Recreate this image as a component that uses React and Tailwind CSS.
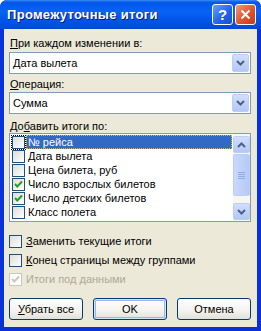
import React from 'react';

const Check = ({ color = '#21A121' }) => (
  <svg width="9" height="9" viewBox="0 0 9 9">
    <polyline points="1,4 3.3,6.5 8,1.5" fill="none" stroke={color} strokeWidth="2" />
  </svg>
);

const Box = ({ checked, disabled }) => (
  <span
    className={
      disabled
        ? 'w-[13px] h-[13px] shrink-0 flex items-center justify-center border border-[#CAC8BB] bg-white'
        : 'w-[13px] h-[13px] shrink-0 flex items-center justify-center border border-[#1C5180] bg-[linear-gradient(135deg,#DCDCD7,#FFFFFF)]'
    }
  >
    {checked && <Check color={disabled ? '#CAC8BB' : '#21A121'} />}
  </span>
);

const Chevron = ({ up }) => (
  <svg width="9" height="6" viewBox="0 0 9 6">
    <polyline
      points={up ? '1,5 4.5,1.5 8,5' : '1,1 4.5,4.5 8,1'}
      fill="none"
      stroke="#4D6185"
      strokeWidth="2"
    />
  </svg>
);

const Combo = ({ value }) => (
  <div className="h-[22px] flex border border-[#7F9DB9] bg-white">
    <span className="flex-1 pl-[3px] flex items-center">{value}</span>
    <span className="w-[17px] m-px flex items-center justify-center rounded-[2px] border border-[#B9CEF8] bg-[linear-gradient(to_bottom,#D2DEFB,#B3C7F6)]">
      <Chevron />
    </span>
  </div>
);

const items = [
  { label: '№ рейса', checked: false, selected: true },
  { label: 'Дата вылета', checked: false },
  { label: 'Цена билета, руб', checked: false },
  { label: 'Число взрослых билетов', checked: true },
  { label: 'Число детских билетов', checked: true },
  { label: 'Класс полета', checked: false },
];

const Btn = ({ children, primary }) => (
  <button
    className={
      'w-[74px] h-[22px] rounded-[3px] border border-[#003C74] flex items-center justify-center bg-[linear-gradient(to_bottom,#FFFFFF,#F3F2EE_60%,#E3E0D6)] ' +
      (primary ? 'shadow-[inset_0_0_0_1px_#CEE7FF,inset_0_0_0_2px_#98B8EA]' : '')
    }
  >
    {children}
  </button>
);

export default function App() {
  return (
    <div className="w-[261px] h-[331px] flex flex-col bg-[#0831D9] rounded-t-[7px] overflow-hidden font-['Liberation_Sans',Arial,sans-serif] text-[11px] leading-[13px] text-black">
      {/* title bar */}
      <div className="h-[29px] shrink-0 flex items-center pl-[7px] pr-[5px] bg-[linear-gradient(to_bottom,#3A8CF8_0px,#0B5AE8_2px,#0058EE_4px,#0A62F6_40%,#0055E8_70%,#0048D4_100%)]">
        <span className="text-white font-bold text-[13px] leading-[15px] tracking-[0.3px] [text-shadow:1px_1px_#0A1883]">
          Промежуточные итоги
        </span>
        <div className="ml-auto flex gap-[2px]">
          <span className="w-[21px] h-[21px] rounded-[3px] border border-white flex items-center justify-center bg-[linear-gradient(135deg,#6A9EFF,#2160E6_60%,#1A4FD0)] text-white font-bold text-[15px] leading-none">
            ?
          </span>
          <span className="w-[21px] h-[21px] rounded-[3px] border border-white flex items-center justify-center bg-[linear-gradient(135deg,#F0987A,#E0532F_55%,#C43A1C)]">
            <svg width="11" height="11" viewBox="0 0 11 11">
              <path d="M1.5 1.5 L9.5 9.5 M9.5 1.5 L1.5 9.5" stroke="white" strokeWidth="2" />
            </svg>
          </span>
        </div>
      </div>

      {/* body */}
      <div className="flex-1 mx-[4px] mb-[4px] bg-[#ECE9D8] pl-[5px] pr-[6px] pt-[8px] flex flex-col">
        <div className="pl-px">
          <span className="underline">П</span>ри каждом изменении в:
        </div>
        <div className="mt-[2px]">
          <Combo value="Дата вылета" />
        </div>
        <div className="mt-[4px] pl-px">
          <span className="underline">О</span>перация:
        </div>
        <div className="mt-px">
          <Combo value="Сумма" />
        </div>
        <div className="mt-[6px] pl-px">
          До<span className="underline">б</span>авить итоги по:
        </div>

        {/* list */}
        <div className="h-[89px] flex border border-[#7F9DB9] bg-white">
          <div className="flex-1 pt-px pl-[2px] pr-px flex flex-col">
            {items.map((it) => (
              <div key={it.label} className="h-[14px] flex items-center">
                <span className={it.selected ? 'outline outline-1 outline-dotted outline-black' : ''}>
                  <Box checked={it.checked} />
                </span>
                <span
                  className={
                    it.selected
                      ? 'ml-[1px] flex-1 h-[14px] pl-[2px] flex items-center bg-[#316AC5] text-white outline outline-1 outline-dotted outline-[#E8B040] -outline-offset-1'
                      : 'ml-[1px] flex-1 h-[14px] pl-[2px] flex items-center'
                  }
                >
                  {it.label}
                </span>
              </div>
            ))}
          </div>
          <div className="w-[17px] flex flex-col bg-[#F7F6F0] pt-[2px] pb-px">
            <span className="h-[17px] rounded-[2px] border border-[#B9CEF8] flex items-center justify-center bg-[linear-gradient(to_bottom,#D2DEFB,#B3C7F6)]">
              <Chevron up />
            </span>
            <span className="h-[42px] mt-px rounded-[2px] border border-[#B9CEF8] flex flex-col items-center justify-center gap-px bg-[linear-gradient(to_right,#C9D8FC,#B6CAF7)]">
              <span className="w-[7px] h-px bg-[#8EACEC]" />
              <span className="w-[7px] h-px bg-[#8EACEC]" />
              <span className="w-[7px] h-px bg-[#8EACEC]" />
              <span className="w-[7px] h-px bg-[#8EACEC]" />
            </span>
            <span className="flex-1" />
            <span className="h-[17px] rounded-[2px] border border-[#B9CEF8] flex items-center justify-center bg-[linear-gradient(to_bottom,#D2DEFB,#B3C7F6)]">
              <Chevron />
            </span>
          </div>
        </div>

        {/* options */}
        <div className="mt-[10px] flex flex-col">
          <div className="h-[19px] flex items-center gap-[4px]">
            <Box />
            <span>
              <span className="underline">З</span>аменить текущие итоги
            </span>
          </div>
          <div className="h-[19px] flex items-center gap-[4px]">
            <Box />
            <span>
              <span className="underline">К</span>онец страницы между группами
            </span>
          </div>
          <div className="h-[19px] flex items-center gap-[4px] text-[#ACA899]">
            <Box checked disabled />
            <span>Итоги под данными</span>
          </div>
        </div>

        {/* buttons */}
        <div className="mt-[9px] flex gap-[10px]">
          <Btn>
            <span>
              <span className="underline">У</span>брать все
            </span>
          </Btn>
          <Btn primary>OK</Btn>
          <Btn>Отмена</Btn>
        </div>
      </div>
    </div>
  );
}
